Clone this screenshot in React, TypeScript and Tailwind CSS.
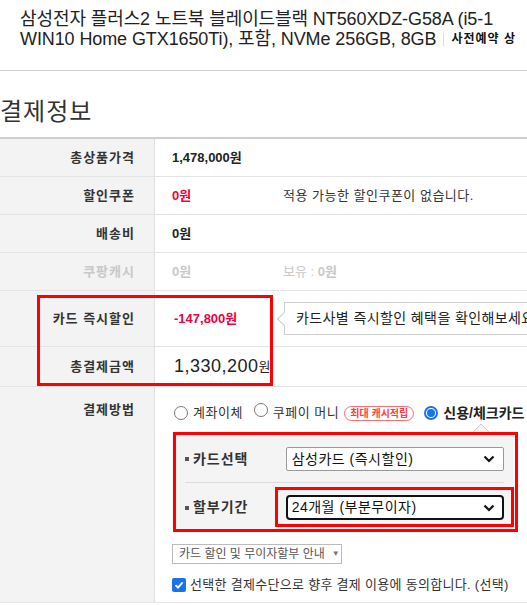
// Checkout payment info screen. Single file, Tailwind classes only.
const FONT = { fontFamily: '"Liberation Sans", "Noto Sans CJK KR", sans-serif' };

function Radio({ checked }: { checked?: boolean }) {
  return checked ? (
    <span className="inline-flex h-[14px] w-[14px] items-center justify-center rounded-full border-2 border-[#1a73e8] bg-white">
      <span className="h-[8px] w-[8px] rounded-full bg-[#1a73e8]" />
    </span>
  ) : (
    <span className="inline-block h-[14px] w-[14px] rounded-full border border-[#777] bg-white" />
  );
}

function Chevron() {
  return (
    <svg width="12" height="8" viewBox="0 0 12 8" className="shrink-0">
      <path d="M1.5 1.5 L6 6 L10.5 1.5" fill="none" stroke="#111" strokeWidth="2.2" />
    </svg>
  );
}

function Row({
  label,
  h,
  muted,
  children,
}: {
  label: string;
  h: string;
  muted?: boolean;
  children?: React.ReactNode;
}) {
  return (
    <div className={['flex border-b border-[#e4e4e4]', h].join(' ')}>
      <div
        className={[
          'flex w-[155px] shrink-0 items-center justify-end border-r border-[#e0e0e0] bg-[#f3f3f3] pr-[19px] text-[13px] font-bold tracking-[1px]',
          muted ? 'text-[#c8c8c8]' : 'text-[#333]',
        ].join(' ')}
      >
        {label}
      </div>
      <div className="flex min-w-0 flex-1 items-center pl-[17px] text-[13px]">{children}</div>
    </div>
  );
}

export default function App() {
  return (
    <div className="relative h-[605px] w-[527px] overflow-hidden bg-white text-[#333]" style={FONT}>
      {/* Product title */}
      <header className="h-[71px] overflow-hidden border-b border-[#cfcfcf] pl-[20px] pt-[9px] text-[18px] leading-[20px] tracking-[-0.1px] text-[#222]">
        <p className="whitespace-nowrap">삼성전자 플러스2 노트북 블레이드블랙 NT560XDZ-G58A (i5-1</p>
        <p className="flex items-center whitespace-nowrap">
          WIN10 Home GTX1650Ti), 포함, NVMe 256GB, 8GB
          <span className="mx-[7px] h-[13px] w-px bg-[#ddd]" />
          <span className="text-[12px] font-bold tracking-[1px] text-[#111]">사전예약 상</span>
        </p>
      </header>

      <h2 className="pt-[26px] pb-[10px] text-[24px] leading-[30px] tracking-[1px] text-[#333]">결제정보</h2>

      {/* Payment table */}
      <div className="border-t-2 border-[#cfcfcf]">
        <Row label="총상품가격" h="h-[38px]">
          <span className="font-bold text-[#222]">1,478,000원</span>
        </Row>
        <Row label="할인쿠폰" h="h-[38px]">
          <span className="w-[111px] shrink-0 font-bold text-[#f0003c]">0원</span>
          <span className="whitespace-nowrap tracking-[0.5px] text-[#333]">적용 가능한 할인쿠폰이 없습니다.</span>
        </Row>
        <Row label="배송비" h="h-[38px]">
          <span className="font-bold text-[#222]">0원</span>
        </Row>
        <Row label="쿠팡캐시" h="h-[38px]" muted>
          <span className="w-[111px] shrink-0 font-bold text-[#c8c8c8]">0원</span>
          <span className="text-[#c8c8c8]">
            보유 : <b>0원</b>
          </span>
        </Row>
        <Row label="카드 즉시할인" h="h-[56px]">
          <span className="w-[112px] shrink-0 pl-[2px] font-bold text-[#f0003c]">-147,800원</span>
          {/* tooltip bubble */}
          <div className="relative flex h-[33px] flex-1 items-center whitespace-nowrap border border-[#cfcfcf] bg-white pl-[11px] text-[14px] tracking-[0.4px] text-[#222]">
            <span className="absolute -left-[6px] top-[11px] h-[10px] w-[10px] rotate-45 border-b border-l border-[#cfcfcf] bg-white" />
            카드사별 즉시할인 혜택을 확인해보세요
          </div>
        </Row>
        <Row label="총결제금액" h="h-[40px]">
          <span className="pl-[2px] text-[18px] tracking-[0.5px] text-[#222]">1,330,200</span>
          <span className="text-[13px] text-[#222]">원</span>
        </Row>

        {/* Payment method */}
        <div className="flex h-[216px] border-b border-[#e4e4e4]">
          <div className="w-[155px] shrink-0 border-r border-[#e0e0e0] bg-[#f3f3f3] pr-[19px] pt-[13px] text-right text-[13px] font-bold tracking-[1px] text-[#333]">
            결제방법
          </div>
          <div className="min-w-0 flex-1 pl-[19px] pt-[17px]">
            <div className="flex h-[18px] items-center whitespace-nowrap text-[13px] text-[#333]">
              <Radio />
              <span className="ml-[5px] tracking-[0.5px]">계좌이체</span>
              <span className="ml-[11px]">
                <Radio />
              </span>
              <span className="ml-[5px] tracking-[0.5px]">쿠페이 머니</span>
              <span className="ml-[5px] rounded-full border border-[#ff6b6b] px-[5px] text-[10px] font-bold leading-[13px] text-[#ff3b3b]">
                최대 캐시적립
              </span>
              <span className="ml-[10px]">
                <Radio checked />
              </span>
              <span className="ml-[5px] text-[14px] font-bold text-[#222]">신용/체크카드</span>
            </div>

            {/* Card panel */}
            <div className="relative -ml-[2px] mt-[10px] w-[342px] bg-[#f4f4f4] pl-[13px] pr-[10px] pt-[15px] pb-[10px]">
              <svg width="18" height="10" viewBox="0 0 18 10" className="absolute -top-[9px] left-[300px]">
                <path d="M0 10 L9 1 L18 10" fill="#f4f4f4" stroke="#ccc" strokeWidth="1" />
              </svg>
              <div className="flex h-[24px] items-center">
                <span className="mr-[4px] h-[4px] w-[4px] bg-[#555]" />
                <span className="w-[93px] text-[14px] font-bold tracking-[1px] text-[#333]">카드선택</span>
                <div className="flex h-[24px] w-[219px] items-center justify-between rounded-[2px] border border-[#999] bg-white pl-[5px] pr-[8px] text-[14px] tracking-[0.5px] text-[#111]">
                  삼성카드 (즉시할인)
                  <Chevron />
                </div>
              </div>
              <div className="mt-[11px] h-px bg-[#dcdcdc]" />
              <div className="mt-[12px] flex h-[25px] items-center">
                <span className="mr-[4px] h-[4px] w-[4px] bg-[#555]" />
                <span className="w-[93px] text-[14px] font-bold tracking-[1px] text-[#333]">할부기간</span>
                <div className="flex h-[25px] w-[219px] items-center justify-between rounded-[4px] border-2 border-[#111] bg-white pl-[4px] pr-[7px] text-[14px] tracking-[0.5px] text-[#111]">
                  24개월 (부분무이자)
                  <Chevron />
                </div>
              </div>
            </div>

            <div className="-ml-[2px] mt-[14px] flex h-[20px] w-[170px] items-center whitespace-nowrap border border-[#bbb] bg-white pl-[6px] text-[12px] text-[#555]">
              카드 할인 및 무이자할부 안내
              <span className="ml-[7px] text-[8px] text-[#777]">▼</span>
            </div>

            <label className="-ml-[2px] mt-[11px] flex items-center whitespace-nowrap text-[13px] tracking-[0.3px] text-[#333]">
              <span className="mr-[4px] flex h-[14px] w-[14px] items-center justify-center rounded-[2px] bg-[#1a73e8]">
                <svg width="10" height="10" viewBox="0 0 10 10">
                  <path d="M1.5 5.2 L4 7.6 L8.6 2.4" fill="none" stroke="#fff" strokeWidth="1.8" />
                </svg>
              </span>
              선택한 결제수단으로 향후 결제 이용에 동의합니다. (선택)
            </label>
          </div>
        </div>
      </div>

      {/* Red annotation boxes */}
      <div className="pointer-events-none absolute left-[37px] top-[295px] h-[91px] w-[236px] border-[3px] border-[#ff0000]" />
      <div className="pointer-events-none absolute left-[173px] top-[432px] h-[100px] w-[345px] border-[3px] border-[#ff0000]" />
      <div className="pointer-events-none absolute left-[275px] top-[487px] h-[40px] w-[239px] border-[3px] border-[#ff0000]" />
    </div>
  );
}
